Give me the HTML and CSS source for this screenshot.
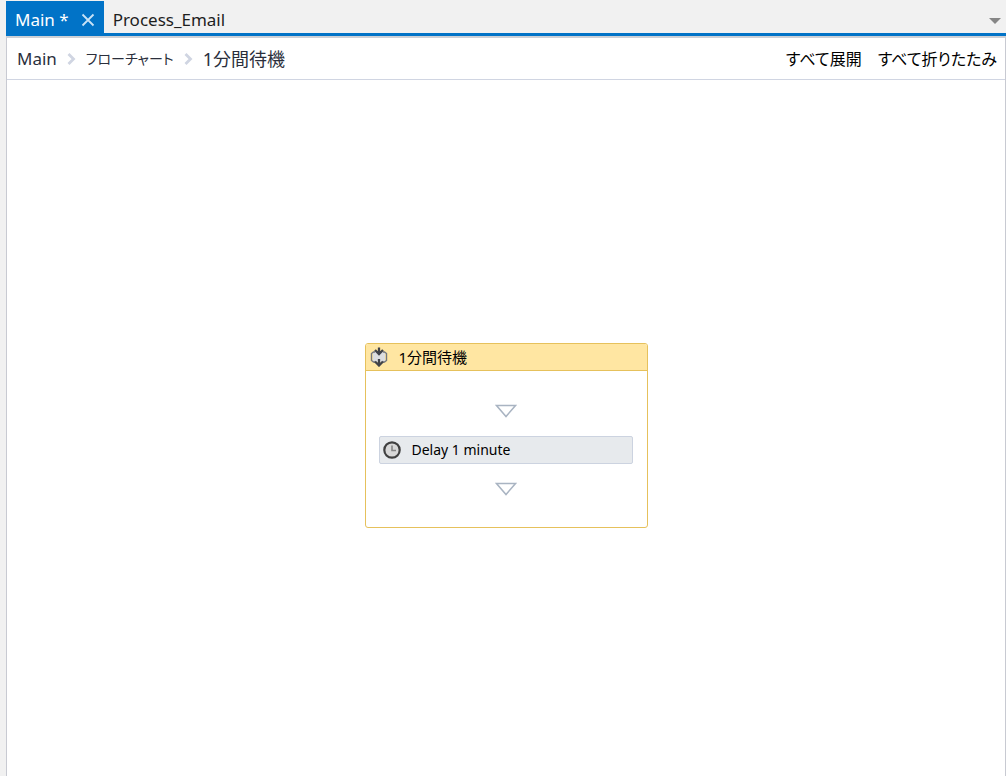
FILE: index.html
```html
<!DOCTYPE html>
<html lang="ja">
<head>
<meta charset="utf-8">
<meta name="viewport" content="width=device-width, initial-scale=1">
<title>Main</title>
<link rel="stylesheet" href="styles.css">
</head>
<body>
<div class="workspace">
  <div class="tabs">
    <div class="tab tab-active">
      <button class="tab-label" type="button">Main *</button>
      <button class="tab-close" type="button" aria-label="Close">
        <svg width="14" height="14" viewBox="0 0 14 14"><path d="M1.5 1.5l11 11M12.5 1.5l-11 11" fill="none" stroke="#c8e2f6" stroke-width="1.8"/></svg>
      </button>
    </div>
    <div class="tab">
      <button class="tab-label" type="button">Process_Email</button>
    </div>
    <button class="tab-menu" type="button" aria-label="Open tabs">
      <svg width="12" height="6" viewBox="0 0 12 6"><path d="M0 0h12L6 6z" fill="#868686"/></svg>
    </button>
  </div>
  <main class="designer">
    <div class="toolbar">
      <nav class="breadcrumb">
        <a class="crumb" href="#main">Main</a>
        <svg class="chevron" width="9" height="12" viewBox="0 0 9 12"><path d="M1.5 1l5 5-5 5" fill="none" stroke="#d0d5e2" stroke-width="2.8"/></svg>
        <a class="crumb crumb-kana" href="#flowchart">フローチャート</a>
        <svg class="chevron" width="9" height="12" viewBox="0 0 9 12"><path d="M1.5 1l5 5-5 5" fill="none" stroke="#d0d5e2" stroke-width="2.8"/></svg>
        <a class="crumb crumb-kanji" href="#wait">1分間待機</a>
      </nav>
      <div class="actions">
        <button class="action" type="button">すべて展開</button>
        <button class="action" type="button">すべて折りたたみ</button>
      </div>
    </div>
    <div class="canvas">
      <section class="sequence">
        <header class="sequence-head">
          <svg width="18" height="20" viewBox="0 0 18 20">
            <path d="M3 5h12v10H3z" fill="#dcdde0"/>
            <path d="M5 5H3.500L1.500 6.500v7L3.500 15H5M13 5h1.500l2 1.500v7l-2 1.500H13" fill="none" stroke="#74777f" stroke-width="1.400"/>
            <path d="M9 .5v6M5 3l4 4 4-4M9 12v6M5 14.500l4 4 4-4" fill="none" stroke="#404249" stroke-width="2.300"/>
          </svg>
          <h1 class="sequence-title">1分間待機</h1>
        </header>
        <div class="sequence-body">
          <svg class="drop" width="22" height="14" viewBox="0 0 22 14"><path d="M1.500 1.500h19L11 12.500z" fill="#fff" stroke="#a9b4c2" stroke-width="1.500"/></svg>
          <div class="activity">
            <svg width="18" height="18" viewBox="0 0 18 18"><circle cx="9" cy="9" r="7.700" fill="#d8d8d8" stroke="#404040" stroke-width="2.200"/><path d="M9 4.500V9.500h4" fill="none" stroke="#858585" stroke-width="1.600"/></svg>
            <span class="activity-title">Delay 1 minute</span>
          </div>
          <svg class="drop" width="22" height="14" viewBox="0 0 22 14"><path d="M1.500 1.500h19L11 12.500z" fill="#fff" stroke="#a9b4c2" stroke-width="1.500"/></svg>
        </div>
      </section>
    </div>
  </main>
</div>
</body>
</html>
```
FILE: styles.css
```css
* {
  box-sizing: border-box;
}

body {
  margin: 0;
  background: #f1f1f1;
  color: #1e1e1e;
  font-family: "Noto Sans", "Noto Sans CJK JP", sans-serif;
  font-size: 17px;
  line-height: 24px;
  font-feature-settings: "palt";
}

button {
  margin: 0;
  padding: 0;
  border: 0;
  background: none;
  color: inherit;
  font: inherit;
  font-feature-settings: inherit;
  white-space: nowrap;
}

svg {
  display: block;
  flex: none;
}

.workspace {
  display: flex;
  flex-direction: column;
  min-height: 100vh;
  padding: 1px 0 0 6px;
}

.tabs {
  display: flex;
  align-items: stretch;
  height: 35px;
  border-bottom: 3px solid #0173c7;
}

.tab {
  display: flex;
  align-items: center;
  gap: 12px;
  padding: 5px 9px 0;
}

.tab-active {
  background: #0173c7;
  color: #fff;
}

.tab-menu {
  margin-left: auto;
  padding: 8px 5px 0;
}

.designer {
  display: flex;
  flex: 1;
  flex-direction: column;
  border: 1px solid #c8cad2;
  border-top: 2px solid #ccd0d6;
  border-bottom: 0;
  background: #fff;
}

.toolbar {
  display: flex;
  align-items: center;
  justify-content: space-between;
  height: 42px;
  padding: 0 8px 0 10px;
  border-bottom: 1px solid #d0d5e2;
}

.breadcrumb {
  display: flex;
  align-items: center;
  gap: 10px;
}

.crumb {
  color: #2b2f3c;
  text-decoration: none;
}

.crumb-kana {
  font-size: 14px;
}

.crumb-kanji {
  font-size: 18px;
}

.actions {
  display: flex;
  gap: 16px;
  color: #000;
  font-size: 16px;
}

.canvas {
  display: flex;
  flex: 1;
  align-items: flex-start;
  justify-content: center;
  padding: 263px 16px 16px;
}

.sequence {
  width: 283px;
  border: 1px solid #e6c15c;
  border-radius: 3px;
  background: #fff;
  color: #000;
  font-size: 14px;
  line-height: 20px;
}

.sequence-head {
  display: flex;
  align-items: center;
  gap: 11px;
  height: 27px;
  padding-left: 4px;
  border-bottom: 1px solid #e6c15c;
  border-radius: 2px 2px 0 0;
  background: #ffe6a2;
}

.sequence-title {
  margin: 0;
  font-size: 15px;
  font-weight: 400;
}

.sequence-body {
  display: flex;
  flex-direction: column;
  align-items: center;
  gap: 18px;
  padding: 33px 14px 31px 13px;
}

.activity {
  display: flex;
  align-items: center;
  gap: 11px;
  width: 100%;
  height: 28px;
  padding: 0 3px;
  border: 1px solid #ccd3e0;
  border-radius: 2px;
  background: #e7eaed;
}
```
